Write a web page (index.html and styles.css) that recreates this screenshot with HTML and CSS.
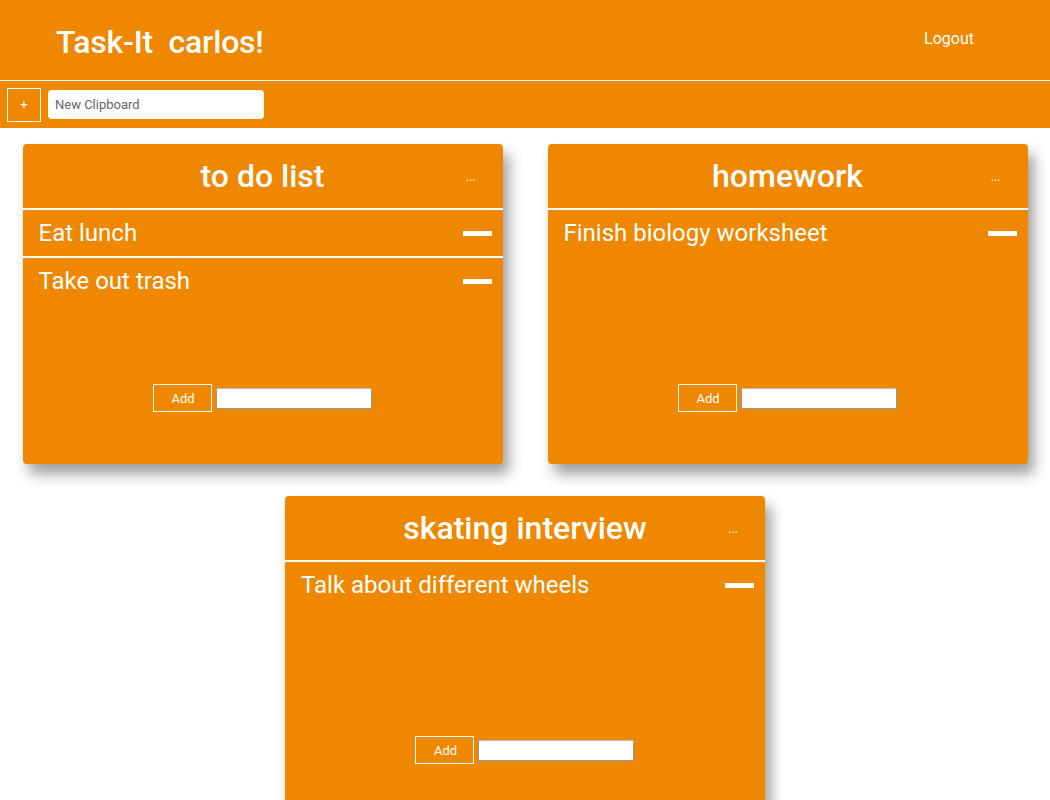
FILE: index.html
```html
<!DOCTYPE html>
<html lang="en">
<head>
    <meta charset="UTF-8">
    <meta name="viewport" content="width=device-width, initial-scale=1.0">
    <title>Task-It</title>
    <link rel="stylesheet" href="styles.css">
</head>
<body>
    <header class="topbar">
        <h1 class="brand">Task-It  carlos!</h1>
        <a class="logout" href="#">Logout</a>
    </header>

    <div class="toolbar">
        <button class="new-btn">+</button>
        <input class="new-input" type="text" placeholder="New Clipboard">
    </div>

    <main class="boards">
        <div class="card">
            <div class="card-head">
                <h2 class="card-title">to do list</h2>
                <span class="more">...</span>
            </div>
            <ul class="items">
                <li><span>Eat lunch</span><span class="remove"></span></li>
                <li><span>Take out trash</span><span class="remove"></span></li>
            </ul>
            <div class="add-row">
                <button class="add-btn">Add</button>
                <input class="add-input" type="text">
            </div>
        </div>

        <div class="card">
            <div class="card-head">
                <h2 class="card-title">homework</h2>
                <span class="more">...</span>
            </div>
            <ul class="items">
                <li><span>Finish biology worksheet</span><span class="remove"></span></li>
            </ul>
            <div class="add-row">
                <button class="add-btn">Add</button>
                <input class="add-input" type="text">
            </div>
        </div>

        <div class="card">
            <div class="card-head">
                <h2 class="card-title">skating interview</h2>
                <span class="more">...</span>
            </div>
            <ul class="items">
                <li><span>Talk about different wheels</span><span class="remove"></span></li>
            </ul>
            <div class="add-row">
                <button class="add-btn">Add</button>
                <input class="add-input" type="text">
            </div>
        </div>
    </main>
</body>
</html>
```

FILE: styles.css
```css
body {
    margin: 0;
    font-family: Roboto, "Liberation Sans", Arial, sans-serif;
    background: #fff;
}

/* Header */
.topbar {
    display: flex;
    justify-content: space-between;
    align-items: center;
    height: 80px;
    background-color: #ef8700;
    border-bottom: 1px solid #fff;
    color: #fff;
}

.brand {
    margin: 0 0 0 56px;
    font-size: 32px;
    font-weight: 500;
    letter-spacing: -0.2px;
    white-space: pre;
    padding-top: 3px;
}

.logout {
    color: #fff;
    text-decoration: none;
    font-size: 16px;
    margin-right: 76px;
    margin-bottom: 4px;
}

/* Toolbar */
.toolbar {
    display: flex;
    align-items: center;
    gap: 7px;
    height: 47px;
    padding-left: 7px;
    background-color: #ef8700;
}

.new-btn {
    width: 34px;
    height: 34px;
    background: transparent;
    border: 1px solid #fff;
    color: #fff;
    font-size: 13px;
    font-family: inherit;
    padding: 0;
}

.new-input {
    width: 216px;
    height: 29px;
    box-sizing: border-box;
    border: none;
    border-radius: 4px;
    padding: 0 7px;
    font-size: 13px;
    font-family: inherit;
}

.new-input::placeholder {
    color: #666;
}

/* Boards */
.boards {
    display: flex;
    flex-wrap: wrap;
    justify-content: center;
    column-gap: 45px;
    row-gap: 32px;
    padding-top: 16px;
}

.card {
    width: 480px;
    height: 320px;
    background-color: #ef8700;
    border-radius: 4px;
    box-shadow: 6px 10px 14px rgba(0, 0, 0, 0.38);
    color: #fff;
}

.card-head {
    position: relative;
    height: 64px;
    border-bottom: 2px solid #fff;
    display: flex;
    align-items: center;
    justify-content: center;
}

.card-title {
    margin: 0;
    font-size: 32px;
    font-weight: 500;
}

.more {
    position: absolute;
    right: 27px;
    top: 26px;
    font-size: 12px;
}

.items {
    list-style: none;
    margin: 0;
    padding: 0;
    height: 174px;
}

.items li {
    display: flex;
    justify-content: space-between;
    align-items: center;
    height: 46px;
    padding: 0 11px 0 16px;
    font-size: 24px;
}

.items li + li {
    border-top: 2px solid #fff;
}

.remove {
    width: 29px;
    height: 5px;
    background: #fff;
}

.add-row {
    display: flex;
    justify-content: center;
    align-items: center;
    gap: 4px;
    padding-right: 1px;
}

.add-btn {
    width: 59px;
    height: 28px;
    background: transparent;
    border: 1px solid #fff;
    color: #fff;
    font-size: 13px;
    font-family: inherit;
    padding: 0 0 0 2px;
}

.add-input {
    width: 156px;
    height: 21px;
    box-sizing: border-box;
    border: 1px solid #999;
    border-top-color: #bbb;
    background: #fff;
}
```
